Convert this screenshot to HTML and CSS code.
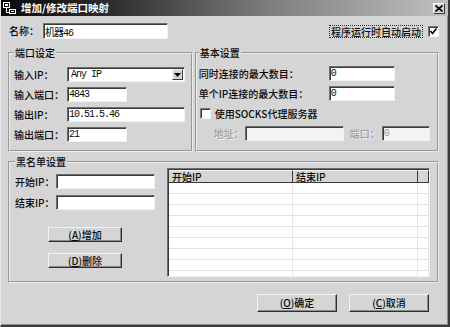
FILE: index.html
```html
<!DOCTYPE html>
<html>
  <head>
    <meta charset="utf-8">
    <title>增加/修改端口映射</title>
    <link rel="stylesheet" href="styles.css">
  </head>
  <body>
    <div class="dialog">
      <div class="titleBar">
        <svg class="appIcon" width="13" height="12" viewBox="0 0 13 12">
          <rect x="0.5" y="0.5" width="6" height="5" fill="none" stroke="#fff" />
          <rect x="2" y="2" width="3" height="2" fill="#fff" />
          <path d="M3.5 6 V10.5 H6.5" fill="none" stroke="#fff" />
          <rect x="6.5" y="7.5" width="6" height="4" fill="none" stroke="#fff" />
          <path d="M8 9.5 H11" stroke="#fff" />
        </svg>
        <span class="titleText">增加/修改端口映射</span>
        <span class="closeBtn">
          <svg width="8" height="7" viewBox="0 0 8 7">
            <path d="M0.5 0.5 L7.5 6.5 M7.5 0.5 L0.5 6.5" stroke="#000" stroke-width="1.6" />
          </svg>
        </span>
      </div>

      <div class="dialogBody">
        <div class="nameRow">
          <label class="nameLabel" for="name">名称：</label>
          <input type="text" id="name" class="field nameField" value="机器46" />
          <span class="autoStart">程序运行时自动启动</span>
          <span class="check">
            <svg width="9" height="9" viewBox="0 0 9 9">
              <path d="M1.5 4 L3.5 6.5 L7.5 1.5" fill="none" stroke="#000" stroke-width="1.6" />
            </svg>
          </span>
        </div>

        <div class="groupRow">
          <fieldset class="group portGroup">
            <legend>端口设定</legend>
            <div class="formRow">
              <label class="portLabel">输入IP：</label>
              <div class="field combo">
                <span class="comboText">Any IP</span>
                <span class="comboArrow">
                  <svg width="7" height="4" viewBox="0 0 7 4"><path d="M0 0 H7 L3.5 4 Z" fill="#000" /></svg>
                </span>
              </div>
            </div>
            <div class="formRow">
              <label class="portLabel">输入端口：</label>
              <input type="text" class="field shortField" value="4843" />
            </div>
            <div class="formRow">
              <label class="portLabel">输出IP：</label>
              <input type="text" class="field longField" value="10.51.5.46" />
            </div>
            <div class="formRow">
              <label class="portLabel">输出端口：</label>
              <input type="text" class="field shortField" value="21" />
            </div>
          </fieldset>

          <fieldset class="group basicGroup">
            <legend>基本设置</legend>
            <div class="formRow">
              <label class="basicLabel">同时连接的最大数目：</label>
              <input type="text" class="field numField" value="0" />
            </div>
            <div class="formRow">
              <label class="basicLabel">单个IP连接的最大数目：</label>
              <input type="text" class="field numField" value="0" />
            </div>
            <div class="formRow socksRow">
              <span class="check"></span>
              <span class="socksText">使用SOCKS代理服务器</span>
            </div>
            <div class="formRow proxyRow">
              <label class="disabledLabel addrLabel">地址：</label>
              <input type="text" class="field addrField" disabled />
              <label class="disabledLabel proxyPortLabel">端口：</label>
              <input type="text" class="field proxyPortField" value="0" disabled />
            </div>
          </fieldset>
        </div>

        <fieldset class="group blackGroup">
          <legend>黑名单设置</legend>
          <div class="blackContent">
            <div class="blackForm">
              <div class="formRow firstIpRow">
                <label class="ipLabel">开始IP：</label>
                <input type="text" class="field ipField" />
              </div>
              <div class="formRow endIpRow">
                <label class="ipLabel">结束IP：</label>
                <input type="text" class="field ipField" />
              </div>
              <button class="winBtn smallBtn addBtn">(<u>A</u>)增加</button>
              <button class="winBtn smallBtn delBtn">(<u>D</u>)删除</button>
            </div>
            <div class="listBox">
              <div class="listHead">
                <span class="headCell">开始IP</span>
                <span class="headCell">结束IP</span>
                <span class="headCell"></span>
              </div>
              <div class="listRow"><span></span><span></span><span></span></div>
              <div class="listRow"><span></span><span></span><span></span></div>
              <div class="listRow"><span></span><span></span><span></span></div>
              <div class="listRow"><span></span><span></span><span></span></div>
              <div class="listRow"><span></span><span></span><span></span></div>
              <div class="listRow"><span></span><span></span><span></span></div>
              <div class="listRow"><span></span><span></span><span></span></div>
              <div class="listRow"><span></span><span></span><span></span></div>
              <div class="listRow"><span></span><span></span><span></span></div>
            </div>
          </div>
        </fieldset>

        <div class="footer">
          <button class="winBtn bigBtn">(<u>O</u>)确定</button>
          <button class="winBtn bigBtn">(<u>C</u>)取消</button>
        </div>
      </div>
    </div>
  </body>
</html>
```

FILE: styles.css
```css
body {
  margin: 0;
  background-color: #ffffff;
}
.dialog {
  width: 450px;
  height: 327px;
  box-sizing: border-box;
  display: flex;
  flex-direction: column;
  background-color: #d5d5d5;
  border-left: 1px solid #e4e4e4;
  border-right: 2px solid #3c3c3c;
  border-bottom: 2px solid #3c3c3c;
  box-shadow: inset -1px -1px #8e8e8e;
  font-family: "Noto Sans CJK SC", sans-serif;
  font-size: 10px;
  font-weight: 500;
  line-height: 12px;
  color: #0a0a0a;
}

/* title bar */
.titleBar {
  height: 16px;
  display: flex;
  align-items: center;
  padding-left: 2px;
  background: linear-gradient(to right, #0a0a0a 0%, #2e2e2e 25%, #7e7e7e 60%, #c0c0c0 100%);
}
.appIcon {
  flex: none;
}
.titleText {
  margin-left: 5px;
  color: #ffffff;
  font-weight: bold;
  font-size: 10.5px;
}
.closeBtn {
  margin-left: auto;
  margin-right: 3px;
  width: 12px;
  height: 11px;
  box-sizing: border-box;
  display: flex;
  align-items: center;
  justify-content: center;
  background-color: #d5d5d5;
  border: 1px solid;
  border-color: #ffffff #3a3a3a #3a3a3a #ffffff;
}

.dialogBody {
  display: flex;
  flex-direction: column;
  padding: 0 9px 0 7px;
}

/* common controls */
.field {
  box-sizing: border-box;
  height: 15px;
  margin: 0;
  padding: 0 0 0 1px;
  border: 1px solid;
  border-color: #6e6e6e #f2f2f2 #f2f2f2 #6e6e6e;
  box-shadow: inset 1px 1px #3a3a3a;
  background-color: #ffffff;
  font-family: "Liberation Mono", "Noto Sans CJK SC", monospace;
  font-size: 10px;
  letter-spacing: -1px;
  color: #0a0a0a;
  outline: none;
}
.field:disabled {
  background-color: #f3f3f3;
  color: #9a9a9a;
}
.check {
  flex: none;
  width: 11px;
  height: 11px;
  box-sizing: border-box;
  display: flex;
  align-items: center;
  justify-content: center;
  background-color: #ffffff;
  border: 1px solid;
  border-color: #7a7a7a #f2f2f2 #f2f2f2 #7a7a7a;
  box-shadow: inset 1px 1px #3a3a3a;
}
.formRow {
  display: flex;
  align-items: center;
  height: 15px;
}
.winBtn {
  box-sizing: border-box;
  margin: 0;
  padding: 0;
  background-color: #d5d5d5;
  border: 1px solid;
  border-color: #f4f4f4 #2e2e2e #2e2e2e #f4f4f4;
  box-shadow: inset -1px -1px #8a8a8a;
  font-family: "Noto Sans CJK SC", sans-serif;
  font-size: 10px;
  font-weight: 500;
  line-height: 12px;
  color: #0a0a0a;
}
.winBtn u {
  text-decoration: underline;
}

/* name row */
.nameRow {
  display: flex;
  align-items: center;
  height: 16px;
  margin-top: 7px;
}
.nameLabel {
  width: 35px;
  padding-left: 1px;
  box-sizing: border-box;
}
.nameField {
  width: 125px;
  height: 16px;
}
.autoStart {
  margin-left: auto;
  padding: 0 1px;
  border: 1px dotted #2a2a2a;
  line-height: 11px;
}
.nameRow .check {
  margin-left: 5px;
}

/* group boxes */
.groupRow {
  display: flex;
  gap: 2px;
  margin-top: 8px;
}
.group {
  margin: 0;
  box-sizing: border-box;
  border: 2px groove #ececec;
  min-inline-size: 0;
}
.group legend {
  padding: 0 1px;
  line-height: 12px;
}
.portGroup {
  width: 186px;
  height: 105px;
  padding: 8px 0 0 4px;
}
.portGroup .formRow {
  margin-bottom: 5px;
}
.portLabel {
  width: 53px;
}
.combo {
  width: 118px;
  display: flex;
  align-items: center;
  padding-right: 1px;
}
.comboText {
  margin-left: 2px;
}
.comboArrow {
  margin-left: auto;
  width: 11px;
  height: 11px;
  box-sizing: border-box;
  display: flex;
  align-items: center;
  justify-content: center;
  background-color: #d5d5d5;
  border: 1px solid;
  border-color: #f4f4f4 #3a3a3a #3a3a3a #f4f4f4;
}
.shortField {
  width: 60px;
}
.longField {
  width: 118px;
}

.basicGroup {
  width: 246px;
  height: 105px;
  padding: 7px 0 0 2px;
}
.basicGroup .formRow {
  margin-bottom: 5px;
}
.basicLabel {
  width: 130px;
}
.numField {
  width: 66px;
}
.socksRow {
  margin-top: 2px;
}
.socksRow .check {
  margin-left: 1px;
}
.socksText {
  margin-left: 4px;
}
.disabledLabel {
  color: #9c9c9c;
  text-shadow: 1px 1px #f4f4f4;
}
.addrLabel {
  width: 31px;
  margin-left: 15px;
}
.addrField {
  width: 99px;
}
.proxyPortLabel {
  width: 32px;
  margin-left: 6px;
}
.proxyPortField {
  width: 48px;
}

/* black list */
.blackGroup {
  margin-top: 4px;
  height: 127px;
  padding: 0 7px 0 5px;
}
.blackContent {
  display: flex;
}
.blackForm {
  width: 153px;
  display: flex;
  flex-direction: column;
}
.firstIpRow {
  margin-top: 6px;
}
.endIpRow {
  margin-top: 6px;
}
.ipLabel {
  width: 41px;
}
.ipField {
  width: 99px;
}
.smallBtn {
  width: 74px;
  height: 15px;
  margin-left: 33px;
}
.addBtn {
  margin-top: 17px;
}
.delBtn {
  margin-top: 11px;
}

.listBox {
  width: 265px;
  height: 109px;
  box-sizing: border-box;
  overflow: hidden;
  background-color: #ffffff;
  border: 1px solid;
  border-color: #6e6e6e #f4f4f4 #f4f4f4 #6e6e6e;
  box-shadow: inset 1px 1px #3a3a3a;
  padding: 1px 0 0 1px;
}
.listHead,
.listRow {
  display: grid;
  grid-template-columns: 124px 125px 1fr;
}
.headCell {
  height: 13px;
  box-sizing: border-box;
  padding-left: 3px;
  background-color: #d5d5d5;
  border-top: 1px solid #f4f4f4;
  border-bottom: 1px solid #3a3a3a;
  border-right: 1px solid #3a3a3a;
  line-height: 11px;
}
.listRow span {
  height: 11px;
  box-sizing: border-box;
  border-bottom: 1px solid #e2e2e2;
  border-right: 1px solid #e6e6e6;
}

/* footer */
.footer {
  display: flex;
  justify-content: flex-end;
  gap: 12px;
  margin-top: 11px;
  margin-right: 10px;
}
.bigBtn {
  width: 80px;
  height: 18px;
}
```
